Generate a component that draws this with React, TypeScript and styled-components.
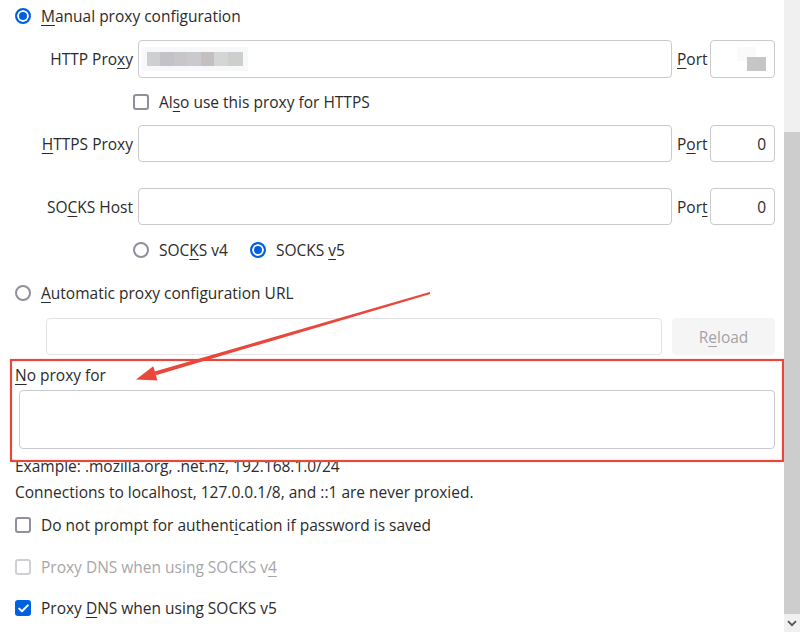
import styled, { createGlobalStyle } from "styled-components";

const GlobalStyle = createGlobalStyle`
  html, body {
    margin: 0;
    padding: 0;
    background: #ffffff;
  }
  body {
    font-family: "Open Sans", "Noto Sans", sans-serif;
    font-size: 15.5px;
    color: #2b2b2b;
  }
`;

const Window = styled.div`
  display: flex;
  width: 800px;
  height: 632px;
  overflow: hidden;
`;

const Content = styled.div`
  position: relative;
  flex: 1;
  display: flex;
  flex-direction: column;
  padding: 0 9px 0 15px;
`;

const Key = styled.u`
  text-decoration: underline;
  text-underline-offset: 3px;
  text-decoration-thickness: 1px;
`;

const OptionRow = styled.div<{ $h: number; $indent?: number; $disabled?: boolean }>`
  display: flex;
  align-items: center;
  gap: 10px;
  height: ${(p) => p.$h}px;
  padding-left: ${(p) => p.$indent ?? 0}px;
  color: ${(p) => (p.$disabled ? "#a6a6a8" : "inherit")};
  white-space: nowrap;
`;

const RadioPair = styled.div`
  display: flex;
  align-items: center;
  gap: 10px;
  margin-right: 12px;
`;

const Radio = styled.span<{ $checked?: boolean }>`
  box-sizing: border-box;
  width: 16px;
  height: 16px;
  border-radius: 50%;
  flex: none;
  border: 2px solid ${(p) => (p.$checked ? "#0061e0" : "#8f8f9d")};
  background: ${(p) => (p.$checked ? "#0061e0" : "#fff")};
  box-shadow: ${(p) => (p.$checked ? "inset 0 0 0 2px #fff" : "none")};
`;

const Box = styled.span<{ $checked?: boolean; $disabled?: boolean }>`
  box-sizing: border-box;
  display: flex;
  align-items: center;
  justify-content: center;
  width: 16px;
  height: 16px;
  flex: none;
  border-radius: 3px;
  border: 2px solid
    ${(p) => (p.$checked ? "#0061e0" : p.$disabled ? "#cfcfd6" : "#8f8f9d")};
  background: ${(p) => (p.$checked ? "#0061e0" : "#fff")};
`;

const FieldRow = styled.div<{ $h: number; $top?: number }>`
  display: grid;
  grid-template-columns: 123px 1fr 38px 65px;
  align-items: center;
  height: ${(p) => p.$h}px;
  margin-top: ${(p) => p.$top ?? 0}px;
`;

const FieldLabel = styled.span`
  text-align: right;
  padding-right: 5px;
  white-space: nowrap;
`;

const PortLabel = styled.span`
  padding-left: 5px;
`;

const TextBox = styled.div<{ $align?: string; $faded?: boolean }>`
  box-sizing: border-box;
  height: 100%;
  display: flex;
  align-items: center;
  justify-content: ${(p) => p.$align ?? "flex-start"};
  padding: 0 8px;
  border: 1px solid ${(p) => (p.$faded ? "#e3e3e6" : "#c9c9ce")};
  border-radius: 4px;
  background: #fff;
`;

const Redacted = styled.span<{ $w: number }>`
  display: block;
  width: ${(p) => p.$w}px;
  height: 14px;
  box-shadow: 0 0 0 5px #f7f8fa;
  background: linear-gradient(
    to right,
    #cfcfd2 0 14%,
    #c3c2c6 14% 28%,
    #c8c6c9 28% 42%,
    #cac9cd 42% 56%,
    #c6bfc2 56% 70%,
    #d4d6d5 70% 84%,
    #cdcfcc 84% 100%
  );
`;

const PortRedacted = styled.span`
  display: block;
  width: 19px;
  height: 14px;
  margin-top: 10px;
  background: #c6c6c6;
  box-shadow: -10px -10px 0 0 #fafafa;
`;

const UrlRow = styled.div`
  display: flex;
  gap: 10px;
  height: 37px;
  margin-top: 7px;
  padding-left: 31px;
`;

const UrlInput = styled(TextBox)`
  flex: 1;
`;

const ReloadButton = styled.div`
  width: 103px;
  display: flex;
  align-items: center;
  justify-content: center;
  border-radius: 4px;
  background: #f5f5f6;
  color: #a3a3a5;
`;

const NoProxy = styled.div`
  margin-top: 7px;
  display: flex;
  flex-direction: column;
`;

const NoProxyLabel = styled.div`
  height: 26px;
  line-height: 26px;
`;

const TextArea = styled.div`
  box-sizing: border-box;
  height: 59px;
  margin: 2px 0 0 4px;
  border: 1px solid #c9c9ce;
  border-radius: 4px;
`;

const Notes = styled.div`
  padding-top: 4px;
  line-height: 26px;
  white-space: nowrap;
`;

const Annotation = styled.svg`
  position: absolute;
  left: 0;
  top: 0;
  pointer-events: none;
`;

const ScrollTrack = styled.div`
  width: 16px;
  flex: none;
  display: flex;
  flex-direction: column;
  background: #f0f0f0;
`;

const ScrollThumb = styled.div`
  flex: 1;
  margin-top: 132px;
  background: #cdcdcd;
`;

const ScrollButton = styled.div`
  height: 18px;
  display: flex;
  align-items: center;
  justify-content: center;
`;

function CheckMark() {
  return (
    <svg width="11" height="9" viewBox="0 0 11 9">
      <path
        d="M1.2 4.6 L4 7.3 L9.8 1.4"
        fill="none"
        stroke="#fff"
        strokeWidth="2"
        strokeLinecap="round"
        strokeLinejoin="round"
      />
    </svg>
  );
}

export default function App() {
  return (
    <Window>
      <GlobalStyle />
      <Content>
        <OptionRow $h={32}>
          <Radio $checked />
          <span>
            <Key>M</Key>anual proxy configuration
          </span>
        </OptionRow>

        <FieldRow $h={38} $top={8}>
          <FieldLabel>
            HTTP Pro<Key>x</Key>y
          </FieldLabel>
          <TextBox>
            <Redacted $w={96} />
          </TextBox>
          <PortLabel>
            <Key>P</Key>ort
          </PortLabel>
          <TextBox $align="flex-end">
            <PortRedacted />
          </TextBox>
        </FieldRow>

        <OptionRow $h={47} $indent={118}>
          <Box />
          <span>
            Al<Key>s</Key>o use this proxy for HTTPS
          </span>
        </OptionRow>

        <FieldRow $h={37}>
          <FieldLabel>
            <Key>H</Key>TTPS Proxy
          </FieldLabel>
          <TextBox />
          <PortLabel>
            P<Key>o</Key>rt
          </PortLabel>
          <TextBox $align="flex-end">0</TextBox>
        </FieldRow>

        <FieldRow $h={37} $top={26}>
          <FieldLabel>
            SO<Key>C</Key>KS Host
          </FieldLabel>
          <TextBox />
          <PortLabel>
            Por<Key>t</Key>
          </PortLabel>
          <TextBox $align="flex-end">0</TextBox>
        </FieldRow>

        <OptionRow $h={50} $indent={118}>
          <RadioPair>
            <Radio />
            <span>
              SOC<Key>K</Key>S v4
            </span>
          </RadioPair>
          <RadioPair>
            <Radio $checked />
            <span>
              SOCKS <Key>v</Key>5
            </span>
          </RadioPair>
        </OptionRow>

        <OptionRow $h={36}>
          <Radio />
          <span>
            <Key>A</Key>utomatic proxy configuration URL
          </span>
        </OptionRow>

        <UrlRow>
          <UrlInput $faded />
          <ReloadButton>
            R<Key>e</Key>load
          </ReloadButton>
        </UrlRow>

        <NoProxy>
          <NoProxyLabel>
            <Key>N</Key>o proxy for
          </NoProxyLabel>
          <TextArea />
        </NoProxy>

        <Notes>
          <div>Example: .mozilla.org, .net.nz, 192.168.1.0/24</div>
          <div>Connections to localhost, 127.0.0.1/8, and ::1 are never proxied.</div>
        </Notes>

        <OptionRow $h={40}>
          <Box />
          <span>
            Do not prompt for authent<Key>i</Key>cation if password is saved
          </span>
        </OptionRow>
        <OptionRow $h={44} $disabled>
          <Box $disabled />
          <span>
            Proxy DNS when using SOCKS v<Key>4</Key>
          </span>
        </OptionRow>
        <OptionRow $h={38}>
          <Box $checked>
            <CheckMark />
          </Box>
          <span>
            Proxy <Key>D</Key>NS when using SOCKS v5
          </span>
        </OptionRow>

        <Annotation width="784" height="632" viewBox="0 0 784 632">
          <rect
            x="11"
            y="360"
            width="772"
            height="101"
            fill="none"
            stroke="#e9473b"
            strokeWidth="2.2"
          />
          <polygon
            points="430.3,293.9 429.7,292.1 154.6,371.5 155.8,375.3"
            fill="#e9473b"
          />
          <polygon
            points="136,379.5 153.3,366.2 157.4,380.4"
            fill="#e9473b"
          />
        </Annotation>
      </Content>

      <ScrollTrack>
        <ScrollThumb />
        <ScrollButton>
          <svg width="10" height="7" viewBox="0 0 10 7">
            <path
              d="M1 1.2 L5 5.2 L9 1.2"
              fill="none"
              stroke="#555"
              strokeWidth="1.8"
            />
          </svg>
        </ScrollButton>
      </ScrollTrack>
    </Window>
  );
}
